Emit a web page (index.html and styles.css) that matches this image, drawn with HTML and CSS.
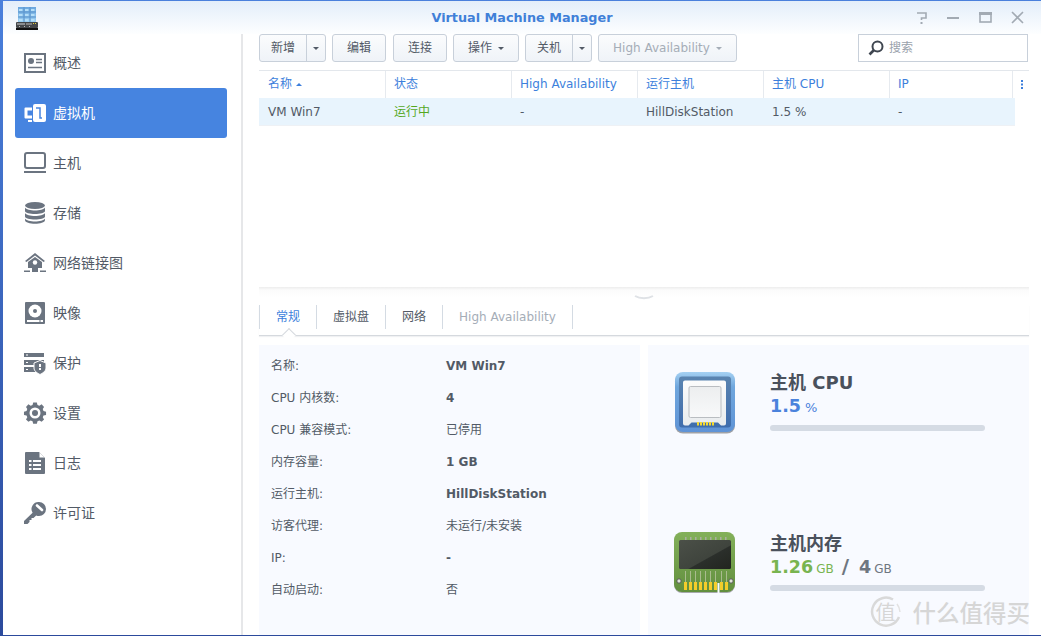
FILE: index.html
```html
<!DOCTYPE html>
<html lang="zh">
<head>
<meta charset="utf-8">
<title>Virtual Machine Manager</title>
<link rel="stylesheet" href="styles.css">
</head>
<body>
<div class="window">
  <header class="titlebar">
    <div class="app-icon">
      <svg width="22" height="24" viewBox="0 0 22 24">
        <defs><linearGradient id="bld" x1="0" y1="0" x2="0" y2="1"><stop offset="0" stop-color="#6aa6de"/><stop offset="1" stop-color="#9ccff2"/></linearGradient></defs>
        <rect x="2" y="0" width="18" height="15" fill="url(#bld)"/>
        <g fill="#5a94cc"><rect x="2" y="4.500" width="18" height="1"/><rect x="2" y="9.500" width="18" height="1"/><rect x="7.500" y="0" width="1" height="15"/><rect x="13.500" y="0" width="1" height="15"/></g>
        <g fill="#b4def8"><rect x="3" y="2" width="3.500" height="2"/><rect x="9" y="2" width="3.500" height="2"/><rect x="15" y="2" width="3.500" height="2"/><rect x="3" y="7" width="3.500" height="2"/><rect x="9" y="7" width="3.500" height="2"/><rect x="15" y="7" width="3.500" height="2"/><rect x="3" y="12" width="3.500" height="2"/><rect x="9" y="12" width="3.500" height="2"/><rect x="15" y="12" width="3.500" height="2"/></g>
        <rect x="0" y="15" width="22" height="6" rx="1" fill="#44474a"/>
        <rect x="0" y="21" width="22" height="2" fill="#111"/>
        <rect x="1" y="16.500" width="8" height="1" fill="#cfd3d6"/><rect x="10" y="16" width="6" height="2" fill="#808080"/><rect x="17" y="16" width="1" height="1" fill="#e8d33c"/><rect x="19" y="16" width="1" height="1" fill="#e8d33c"/>
        <rect x="3" y="19" width="1" height="1" fill="#bbb"/><rect x="8" y="19" width="1" height="1" fill="#bbb"/><rect x="13" y="19" width="1" height="1" fill="#bbb"/>
      </svg>
    </div>
    <h1 class="app-title">Virtual Machine Manager</h1>
    <div class="win-controls">
      <svg width="12" height="14" viewBox="0 0 12 14"><path d="M1 2h9v5H5.500v2" class="ctl-line"/><rect x="4.500" y="11" width="2" height="2" fill="#a2aab3"/></svg>
      <svg width="13" height="14" viewBox="0 0 13 14"><rect x="0" y="6" width="12" height="2" fill="#a2aab3"/></svg>
      <svg width="13" height="14" viewBox="0 0 13 14"><rect x="1" y="2" width="11" height="9" class="ctl-line"/><rect x="0" y="1" width="13" height="3" fill="#a2aab3"/></svg>
      <svg width="13" height="14" viewBox="0 0 13 14"><path d="M1 1l11 11M12 1L1 12" class="ctl-line"/></svg>
    </div>
  </header>

  <nav class="sidebar">
    <a class="nav-item">
      <svg class="nav-icon" viewBox="0 0 22 22"><rect x="1" y="2" width="20" height="18" fill="none" stroke="#6b7480" stroke-width="2"/><circle cx="7" cy="9" r="3" fill="#6b7480"/><path d="M12 7.500h6M12 10.500h6M4 15.500h14" stroke="#6b7480" stroke-width="1.500"/></svg>
      <span>概述</span>
    </a>
    <a class="nav-item active">
      <svg class="nav-icon" viewBox="0 0 22 22"><rect x="9" y="2" width="13" height="18" rx="2" fill="#fff"/><path d="M12 6h4v10h2" fill="none" stroke="#4684e0" stroke-width="1.500"/><path d="M8 5.500H1.500a1 1 0 0 0-1 1v9a1 1 0 0 0 1 1H8v-3H3.500V8.500H8z" fill="#fff"/><rect x="4" y="18" width="4" height="2" fill="#fff"/></svg>
      <span>虚拟机</span>
    </a>
    <a class="nav-item">
      <svg class="nav-icon" viewBox="0 0 22 22"><rect x="1" y="1" width="20" height="15" rx="2" fill="none" stroke="#6b7480" stroke-width="2"/><rect x="0" y="19" width="22" height="2" fill="#6b7480"/></svg>
      <span>主机</span>
    </a>
    <a class="nav-item">
      <svg class="nav-icon" viewBox="0 0 22 22"><g fill="#6b7480"><ellipse cx="11" cy="3.500" rx="10" ry="3.500"/><path d="M1 5.500c2 4 18 4 20 0v3.500c0 4-20 4-20 0z"/><path d="M1 11c2 4 18 4 20 0v3.500c0 4-20 4-20 0z"/><path d="M1 16.500c2 4 18 4 20 0V18c0 5-20 5-20 0z"/></g></svg>
      <span>存储</span>
    </a>
    <a class="nav-item">
      <svg class="nav-icon" viewBox="0 0 22 22"><path d="M1 9l10-8 10 8-1.500 1L11 3.500 2.500 10z" fill="#6b7480"/><path d="M4 10l7-5 7 5v6H4z" fill="#6b7480"/><circle cx="11" cy="10.500" r="2.200" fill="#fff"/><path d="M8 16h6v4H8zM0 18.500h6v1.500H0zM16 18.500h6v1.500h-6z" fill="#6b7480"/></svg>
      <span>网络链接图</span>
    </a>
    <a class="nav-item">
      <svg class="nav-icon" viewBox="0 0 22 22"><rect x="1" y="0" width="20" height="22" rx="1" fill="#6b7480"/><circle cx="11" cy="9" r="6.500" fill="#fff"/><circle cx="11" cy="9" r="2" fill="#6b7480"/><rect x="3" y="18" width="16" height="2" fill="#fff"/><rect x="15" y="18.500" width="2" height="1" fill="#6b7480"/></svg>
      <span>映像</span>
    </a>
    <a class="nav-item">
      <svg class="nav-icon" viewBox="0 0 22 22"><g fill="#6b7480"><rect x="0" y="1" width="20" height="4"/><rect x="0" y="8" width="20" height="5"/><rect x="0" y="15" width="12" height="5"/><path d="M16 8.500l6 2.500v5c0 3-3 5-6 6.500-3-1.500-6-3.500-6-6.500v-5z" stroke="#fff" stroke-width="1"/></g><g fill="#fff"><rect x="2" y="2.500" width="2" height="1"/><rect x="2" y="10" width="2" height="1"/><rect x="2" y="17" width="2" height="1"/><rect x="15" y="12" width="2" height="3"/><rect x="15" y="16" width="2" height="2"/></g></svg>
      <span>保护</span>
    </a>
    <a class="nav-item">
      <svg class="nav-icon" viewBox="0 0 22 22"><path d="M9 0h4l.7 2.600 2 .9L18.200 2l2.600 2.800-1.400 2.400.8 2L23 10v3.500l-2.800.6-.8 2 1.400 2.300L18.200 21l-2.500-1.400-2 .8L13 23H9l-.7-2.600-2-.8L3.800 21 1.200 18.400l1.400-2.300-.8-2L-1 13.500V10l2.800-.8.8-2-1.400-2.400L3.800 2l2.500 1.500 2-.9z" transform="translate(.9 .5) scale(.92)" fill="#6b7480"/><circle cx="11" cy="11" r="5.500" fill="#fff"/><circle cx="11" cy="11" r="3" fill="#6b7480"/></svg>
      <span>设置</span>
    </a>
    <a class="nav-item">
      <svg class="nav-icon" viewBox="0 0 22 22"><path d="M2 0h13l6 6v15a1 1 0 0 1-1 1H2a1 1 0 0 1-1-1V1a1 1 0 0 1 1-1z" fill="#6b7480"/><path d="M15.500 0.500v5h5z" fill="#fff"/><g fill="#fff"><rect x="5" y="8" width="2.500" height="2"/><rect x="9" y="8" width="8" height="2"/><rect x="5" y="12" width="2.500" height="2"/><rect x="9" y="12" width="8" height="2"/><rect x="5" y="16" width="2.500" height="2"/><rect x="9" y="16" width="8" height="2"/></g></svg>
      <span>日志</span>
    </a>
    <a class="nav-item">
      <svg class="nav-icon" viewBox="0 0 22 22"><path d="M15 0a7 7 0 0 1 0 14 7 7 0 0 1-2.800-.6L9.500 16H7.500v2H5.500v2l-2 2H0v-3l8.600-8.300A7 7 0 0 1 15 0z" fill="#6b7480"/><path d="M13 3.500l5 4.500" stroke="#fff" stroke-width="2.600" stroke-linecap="round"/></svg>
      <span>许可证</span>
    </a>
  </nav>

  <main class="content">
    <div class="toolbar">
      <div class="btn split"><span class="split-main">新增</span><span class="split-arrow"><i class="caret"></i></span></div>
      <button class="btn plain">编辑</button>
      <button class="btn plain nudge">连接</button>
      <button class="btn menu">操作<i class="caret"></i></button>
      <div class="btn split"><span class="split-main">关机</span><span class="split-arrow"><i class="caret"></i></span></div>
      <button class="btn menu ha">High Availability<i class="caret"></i></button>
      <label class="search">
        <svg width="16" height="16" viewBox="0 0 16 16"><circle cx="9.500" cy="6.500" r="5" fill="none" stroke="#3f4650" stroke-width="2"/><path d="M6 10l-4.500 4.500" stroke="#3f4650" stroke-width="2.600"/></svg>
        <span>搜索</span>
      </label>
    </div>

    <section class="list">
      <div class="thead">
        <div class="th sorted">名称<i class="sort-up"></i></div>
        <div class="th">状态</div>
        <div class="th">High Availability</div>
        <div class="th">运行主机</div>
        <div class="th">主机 CPU</div>
        <div class="th">IP</div>
        <div class="th more"><svg width="2" height="9" viewBox="0 0 2 9"><g fill="#3d7fdc"><rect x="0" y="0" width="2" height="2"/><rect x="0" y="3.500" width="2" height="2"/><rect x="0" y="7" width="2" height="2"/></g></svg></div>
      </div>
      <div class="tr">
        <div class="td">VM Win7</div>
        <div class="td running">运行中</div>
        <div class="td">-</div>
        <div class="td">HillDiskStation</div>
        <div class="td">1.5 %</div>
        <div class="td">-</div>
      </div>
    </section>

    <div class="splitter"><svg width="20" height="5" viewBox="0 0 20 5"><path d="M1 1c5 3 13 3 18 0" fill="none" stroke="#dfe2e6" stroke-width="2"/></svg></div>

    <div class="tabs">
      <div class="tab current">常规</div>
      <div class="tab">虚拟盘</div>
      <div class="tab">网络</div>
      <div class="tab off">High Availability</div>
    </div>

    <div class="panels">
      <section class="panel info">
        <div class="row"><span class="k">名称:</span><span class="v b">VM Win7</span></div>
        <div class="row"><span class="k">CPU 内核数:</span><span class="v b">4</span></div>
        <div class="row"><span class="k">CPU 兼容模式:</span><span class="v">已停用</span></div>
        <div class="row"><span class="k">内存容量:</span><span class="v b">1 GB</span></div>
        <div class="row"><span class="k">运行主机:</span><span class="v b">HillDiskStation</span></div>
        <div class="row"><span class="k">访客代理:</span><span class="v">未运行/未安装</span></div>
        <div class="row"><span class="k">IP:</span><span class="v b">-</span></div>
        <div class="row"><span class="k">自动启动:</span><span class="v">否</span></div>
      </section>
      <section class="panel stats">
        <div class="stat">
          <svg class="stat-icon" width="62" height="63" viewBox="0 0 62 63">
            <defs>
              <linearGradient id="cpuO" x1="0" y1="0" x2="0" y2="1"><stop offset="0" stop-color="#a4d0f2"/><stop offset=".25" stop-color="#6fa6dd"/><stop offset="1" stop-color="#5f93d6"/></linearGradient>
              <linearGradient id="cpuI" x1="0" y1="0" x2="0" y2="1"><stop offset="0" stop-color="#5a84b0"/><stop offset="1" stop-color="#3f6dad"/></linearGradient>
              <linearGradient id="cpuC" x1="0" y1="0" x2="0" y2="1"><stop offset="0" stop-color="#fbfcfc"/><stop offset="1" stop-color="#e9ecee"/></linearGradient>
              <linearGradient id="cpuD" x1="0" y1="0" x2="0" y2="1"><stop offset="0" stop-color="#eceeef"/><stop offset="1" stop-color="#f8f9fa"/></linearGradient>
            </defs>
            <rect x="1" y="1.500" width="60" height="60" rx="8" fill="#55585c" opacity=".55"/>
            <rect x="1" y="0" width="60" height="60" rx="8" fill="url(#cpuO)"/>
            <rect x="5" y="4.500" width="52" height="51" rx="3" fill="url(#cpuI)"/>
            <path d="M11 8.500h39a2 2 0 0 1 2 2v41a2 2 0 0 1-2 2h-3l-3-3H17.500l-3 3H11a2 2 0 0 1-2-2v-41a2 2 0 0 1 2-2z" fill="url(#cpuC)"/>
            <rect x="15" y="14.500" width="32" height="31" rx="1.500" fill="url(#cpuD)" stroke="#b9bdc1"/>
            <g fill="#f5d932"><rect x="23" y="50" width="2" height="3.500"/><rect x="26" y="50" width="2" height="3.500"/><rect x="29" y="50" width="2" height="3.500"/><rect x="32" y="50" width="2" height="3.500"/><rect x="35" y="50" width="2" height="3.500"/><rect x="38" y="50" width="2" height="3.500"/></g>
          </svg>
          <div class="stat-body">
            <h2 class="stat-title">主机 CPU</h2>
            <div class="stat-value"><b class="blue">1.5</b><small class="blue pct">%</small></div>
            <div class="bar"></div>
          </div>
        </div>
        <div class="stat">
          <svg class="stat-icon" width="62" height="63" viewBox="0 0 62 63">
            <defs>
              <linearGradient id="ramO" x1="0" y1="0" x2="0" y2="1"><stop offset="0" stop-color="#83b05a"/><stop offset="1" stop-color="#628f3e"/></linearGradient>
              <linearGradient id="ramC" x1="0" y1="0" x2="1" y2="1"><stop offset="0" stop-color="#4b5048"/><stop offset=".58" stop-color="#3f443d"/><stop offset=".6" stop-color="#2b2f2b"/><stop offset="1" stop-color="#22251f"/></linearGradient>
            </defs>
            <rect x="0" y="1" width="61" height="60" rx="8" fill="#55585c" opacity=".5"/>
            <rect x="0" y="0" width="61" height="60" rx="8" fill="url(#ramO)"/>
            <g fill="#a9ad9f"><rect x="11" y="5" width="1.500" height="3"/><rect x="16" y="5" width="1.500" height="3"/><rect x="21" y="5" width="1.500" height="3"/><rect x="26" y="5" width="1.500" height="3"/><rect x="31" y="5" width="1.500" height="3"/><rect x="36" y="5" width="1.500" height="3"/><rect x="41" y="5" width="1.500" height="3"/><rect x="46" y="5" width="1.500" height="3"/><rect x="51" y="5" width="1.500" height="3"/></g>
            <rect x="5" y="8" width="52" height="29" rx="1.500" fill="url(#ramC)"/>
            <g fill="#a9bb8e"><rect x="11" y="39" width="1" height="11"/><rect x="16" y="39" width="1" height="11"/><rect x="21" y="39" width="1" height="11"/><rect x="26" y="39" width="1" height="11"/><rect x="31" y="39" width="1" height="11"/><rect x="36" y="39" width="1" height="11"/><rect x="41" y="39" width="1" height="11"/><rect x="47" y="39" width="1" height="11"/><rect x="52" y="39" width="1" height="11"/></g>
            <g fill="#f4cd2a"><rect x="10" y="50" width="3" height="8"/><rect x="15" y="50" width="3" height="8"/><rect x="20" y="50" width="3" height="8"/><rect x="25" y="50" width="3" height="8"/><rect x="30" y="50" width="3" height="8"/><rect x="35" y="50" width="3" height="8"/><rect x="40" y="50" width="3" height="8"/><rect x="46" y="50" width="3" height="8"/><rect x="51" y="50" width="3" height="8"/></g>
            <rect x="43.500" y="51" width="2" height="10" fill="#f8faff"/>
            <g fill="#dfe3d8" stroke="#565a55" stroke-width="1"><circle cx="5" cy="49" r="2.200"/><circle cx="57" cy="49" r="2.200"/></g>
          </svg>
          <div class="stat-body">
            <h2 class="stat-title">主机内存</h2>
            <div class="stat-value"><b class="green">1.26</b><small class="green">GB</small><b class="slash">/</b><b class="gray">4</b><small class="gray">GB</small></div>
            <div class="bar"></div>
          </div>
        </div>
        <div class="watermark">
          <svg width="32" height="32" viewBox="0 0 32 32"><path d="M23 3.500A14 14 0 1 0 29 21" fill="none" stroke="#d9d9d9" stroke-width="2.500"/><path d="M27 8a14 14 0 0 1 3 8" fill="none" stroke="#e2e2e2" stroke-width="1.500"/></svg>
          <span class="wm-char">值</span>
          <span class="wm-text">什么值得买</span>
        </div>
      </section>
    </div>
  </main>
</div>
</body>
</html>
```

FILE: styles.css
```css
* { box-sizing: border-box; }
html, body { margin: 0; height: 100%; }
body {
  width: 1041px;
  height: 636px;
  overflow: hidden;
  padding: 1px 0 1px 3px;
  background: linear-gradient(#4a80dc, #2c4a9c);
  font-family: "DejaVu Sans", "Noto Sans CJK SC", sans-serif;
  font-size: 12px;
  line-height: 16px;
  color: #525a66;
}
.window {
  height: 100%;
  display: grid;
  grid-template-columns: 240px 1fr;
  grid-template-rows: 33px 1fr;
  background: #fff;
}
.titlebar {
  grid-column: 1 / 3;
  display: grid;
  grid-template-columns: 1fr auto 1fr;
  align-items: center;
  background: linear-gradient(#e3eefa, #fdfeff);
}
.app-icon { display: flex; align-items: center; height: 26px; margin: 2px 0 0 13px; }
.app-title {
  margin: 0;
  font-size: 12.8px;
  font-weight: 700;
  color: #3f80d8;
}
.win-controls {
  display: flex;
  justify-content: flex-end;
  align-items: center;
  gap: 19px;
  padding-right: 17px;
}
.ctl-line { fill: none; stroke: #a2aab3; stroke-width: 1.6; }

.sidebar {
  padding: 4px 14px 0 12px;
  border-right: 2px solid #e6e7e9;
  background: #fff;
}
.nav-item {
  display: flex;
  align-items: center;
  gap: 7px;
  height: 50px;
  padding-left: 9px;
  border-radius: 3px;
  font-size: 14px;
  color: #525a66;
}
.nav-item.active { background: #4684e0; color: #fff; }
.nav-icon { width: 22px; height: 22px; flex: none; overflow: visible; }

.content {
  display: flex;
  flex-direction: column;
  min-width: 0;
  min-height: 0;
  padding: 0 12px 0 16px;
}
.toolbar { display: flex; gap: 6px; height: 28px; flex: none; }
.btn {
  display: flex;
  align-items: center;
  justify-content: center;
  height: 28px;
  padding: 0;
  border: 1px solid #c8d0da;
  border-radius: 3px;
  background: linear-gradient(#fbfcfd, #eff3f8);
  font: inherit;
  color: #525a66;
}
.plain { width: 54px; }
.nudge { margin-left: 1px; }
.menu { width: 66px; gap: 6px; }
.menu.ha { width: 139px; color: #a5adb7; }
.menu.ha .caret { border-top-color: #a5adb7; }
.split { width: 67px; }
.split-main { flex: 1; text-align: center; }
.split-arrow {
  display: flex;
  align-items: center;
  justify-content: center;
  width: 19px;
  height: 100%;
  border-left: 1px solid #c8d0da;
}
.caret {
  width: 0;
  height: 0;
  border: 3.5px solid transparent;
  border-top: 3px solid #525a66;
  border-bottom: 0;
}
.search {
  display: flex;
  align-items: center;
  gap: 5px;
  width: 170px;
  height: 28px;
  margin: 0 1px 0 auto;
  padding-left: 9px;
  border: 1px solid #c8d0da;
  background: #fff;
  color: #9aa2ac;
}

.list { flex: none; height: 217px; margin-top: 8px; }
.thead {
  display: grid;
  grid-template-columns: repeat(5, 126px) 123px 1fr;
  height: 28px;
  border-top: 1px solid #e3e7ec;
}
.th {
  display: flex;
  align-items: center;
  gap: 4px;
  padding: 0 0 1px 9px;
  color: #3d7fdc;
}
.th + .th { padding-left: 8px; border-left: 1px solid #e6eaef; }
.th.more { padding-left: 8px; }
.sort-up {
  width: 0;
  height: 0;
  border: 3.5px solid transparent;
  border-bottom: 3px solid #3d7fdc;
  border-top: 0;
}
.tr {
  display: grid;
  grid-template-columns: repeat(6, 126px);
  width: 756px;
  height: 28px;
  background: #e8f4fd;
  border-bottom: 1px solid #eef1f5;
}
.td { display: flex; align-items: center; padding-left: 9px; }
.running { color: #55a81e; }

.splitter {
  flex: none;
  display: flex;
  justify-content: center;
  align-items: flex-end;
  height: 18px;
  padding-bottom: 5px;
  background: linear-gradient(#ededed, #fbfbfb 3px, #fff 10px);
}
.tabs {
  flex: none;
  position: relative;
  display: flex;
  height: 31px;
  padding-bottom: 6px;
  border-bottom: 1px solid #d5d9de;
  box-shadow: 0 1px 1px #f0f1f3;
}
.tab {
  display: flex;
  align-items: center;
  padding: 0 16px;
  border-right: 1px solid #d4dbe3;
  color: #525a66;
}
.tab:first-child { border-left: 1px solid #d4dbe3; }
.tab.current { color: #3d7fdc; }
.tab.off { color: #a5adb7; }
.tab.current::after {
  content: "";
  position: absolute;
  left: 25px;
  bottom: -5px;
  width: 9px;
  height: 9px;
  background: #fff;
  border: 1px solid #d5d9de;
  border-width: 1px 0 0 1px;
  transform: rotate(45deg);
}

.panels {
  flex: 1;
  display: grid;
  grid-template-columns: 381px 381px;
  gap: 8px;
  min-height: 0;
  margin-top: 9px;
}
.panel { background: #f8faff; min-height: 0; }
.info { padding: 5px 0 0 12px; }
.row { display: flex; align-items: center; height: 32px; }
.k { width: 175px; flex: none; }
.v.b { font-weight: 700; }

.stats { position: relative; overflow: visible; }
.stat { display: flex; height: 160px; padding: 27px 0 0 26px; gap: 34px; }
.stat + .stat { height: 130px; }
.stat-icon { flex: none; }
.stat-body { width: 215px; }
.stat-title {
  margin: 0;
  font-size: 18px;
  line-height: 22px;
  font-weight: 700;
  color: #4a515c;
}
.stat + .stat .stat-title { padding-top: 1px; height: 22px; }
.stat-value {
  display: flex;
  align-items: baseline;
  height: 24px;
  line-height: 24px;
  font-size: 17.5px;
}
.stat-value small { font-size: 12px; font-weight: 400; margin-left: 3px; }
.stat-value .pct { font-size: 13px; margin-left: 4px; }
.blue { color: #4a82dc; }
.green { color: #78b450; }
.gray { color: #6e7680; }
.slash { margin: 0 10px 0 8px; color: #6e7680; font-size: 20px; }
.bar { height: 6px; margin-top: 7px; border-radius: 3px; background: #d5dbe4; }

.watermark {
  position: absolute;
  right: -1px;
  bottom: 7px;
  display: flex;
  align-items: center;
  color: #d6d6d6;
  font-family: "Noto Sans CJK SC", sans-serif;
  pointer-events: none;
}
.wm-char {
  position: absolute;
  left: 6px;
  top: 2px;
  font-size: 20px;
  line-height: 28px;
}
.wm-text {
  margin-left: 11px;
  font-size: 23.5px;
  font-weight: 500;
  line-height: 32px;
}
```
